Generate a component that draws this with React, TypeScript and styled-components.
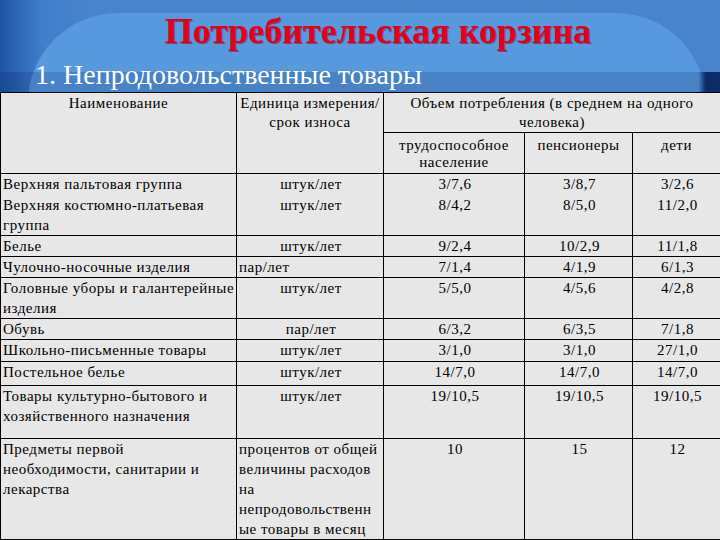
import styled, { createGlobalStyle } from 'styled-components';

const GlobalStyle = createGlobalStyle`
  html, body {
    margin: 0;
    padding: 0;
  }
  body {
    width: 720px;
    height: 540px;
    overflow: hidden;
    background: #0b2a66;
    font-family: 'Liberation Serif', serif;
  }
`;

const Slide = styled.div`
  width: 720px;
  height: 540px;
  display: flex;
  flex-direction: column;
  overflow: hidden;
  background: #0b2a66;
`;

const Header = styled.header`
  position: relative;
  flex: none;
  height: 92px;
  display: flex;
  flex-direction: column;
  overflow: hidden;
  background: linear-gradient(to right, #1f56a4 0, #3f7dc8 40px, #4784cc 90px, #4784cc 100%);

  /* lighter rounded panel behind the title */
  &::before {
    content: '';
    position: absolute;
    left: 28px;
    right: 14px;
    top: 13px;
    height: 220px;
    border-radius: 90px;
    background: #5799dd;
  }

  /* darker strip under the subtitle */
  &::after {
    content: '';
    position: absolute;
    left: 0;
    right: 0;
    top: 72px;
    height: 20px;
    background: linear-gradient(to right, rgba(14, 50, 120, 0.35) 0, rgba(14, 50, 120, 0.22) 40px, rgba(14, 50, 120, 0.22) 97%, #0c2c68 98%);
  }
`;

const Title = styled.h1`
  position: relative;
  z-index: 1;
  margin: 12px 0 0 0;
  padding-left: 36px;
  text-align: center;
  font-family: 'Liberation Serif', serif;
  font-size: 36px;
  line-height: 38px;
  font-weight: bold;
  color: #e2001a;
  text-shadow: 1px 1px 0 rgba(90, 0, 20, 0.45);
`;

const Subtitle = styled.h2`
  position: relative;
  z-index: 1;
  margin: 10px 0 0 35px;
  font-family: 'Liberation Serif', serif;
  font-size: 28px;
  line-height: 30px;
  font-weight: normal;
  color: #ffffff;
  white-space: nowrap;
`;

const Sheet = styled.table`
  flex: none;
  width: 720px;
  table-layout: fixed;
  border-collapse: collapse;
  background: #e7e7e7;
  color: #000;
  font-family: 'Liberation Serif', serif;
  font-size: 15px;
  letter-spacing: 0.5px;
  line-height: 20px;
`;

const HeadCell = styled.th<{ $sub?: boolean }>`
  padding: ${(p) => (p.$sub ? '4px 1px 0 1px' : '1px 1px 0 1px')};
  height: ${(p) => (p.$sub ? '36px' : 'auto')};
  border: 1px solid #000;
  font-family: 'Liberation Serif', serif;
  font-weight: normal;
  line-height: ${(p) => (p.$sub ? '17px' : '19px')};
  text-align: center;
  vertical-align: top;
`;

const Cell = styled.td<{ $align?: 'left' | 'center'; $joined?: boolean; $last?: boolean }>`
  padding: 0 0 0 2px;
  border-left: 1px solid #000;
  border-right: 1px solid #000;
  border-top: ${(p) => (p.$joined ? 'none' : '1px solid #000')};
  border-bottom: ${(p) => (p.$last ? '1px solid #000' : 'none')};
  font-family: 'Liberation Serif', serif;
  text-align: ${(p) => p.$align ?? 'center'};
  vertical-align: top;
  white-space: pre;
`;

const Row = styled.tr<{ $h: number }>`
  height: ${(p) => p.$h}px;
`;

type Item = {
  name: string;
  unit: string;
  unitLeft?: boolean;
  values: [string, string, string];
  h: number;
  joined?: boolean;
};

const items: Item[] = [
  { name: 'Верхняя пальтовая группа', unit: 'штук/лет', values: ['3/7,6', '3/8,7', '3/2,6'], h: 21 },
  { name: 'Верхняя костюмно-платьевая\nгруппа', unit: 'штук/лет', values: ['8/4,2', '8/5,0', '11/2,0'], h: 41, joined: true },
  { name: 'Белье', unit: 'штук/лет', values: ['9/2,4', '10/2,9', '11/1,8'], h: 21 },
  { name: 'Чулочно-носочные изделия', unit: 'пар/лет', unitLeft: true, values: ['7/1,4', '4/1,9', '6/1,3'], h: 21 },
  { name: 'Головные уборы и галантерейные\nизделия', unit: 'штук/лет', values: ['5/5,0', '4/5,6', '4/2,8'], h: 41 },
  { name: 'Обувь', unit: 'пар/лет', values: ['6/3,2', '6/3,5', '7/1,8'], h: 21 },
  { name: 'Школьно-письменные товары', unit: 'штук/лет', values: ['3/1,0', '3/1,0', '27/1,0'], h: 22 },
  { name: 'Постельное белье', unit: 'штук/лет', values: ['14/7,0', '14/7,0', '14/7,0'], h: 24 },
  {
    name: 'Товары культурно-бытового и\nхозяйственного назначения',
    unit: 'штук/лет',
    values: ['19/10,5', '19/10,5', '19/10,5'],
    h: 53,
  },
  {
    name: 'Предметы первой\nнеобходимости, санитарии и\nлекарства',
    unit: 'процентов от общей\nвеличины расходов\nна\nнепродовольственн\nые товары в месяц',
    unitLeft: true,
    values: ['10', '15', '12'],
    h: 99,
  },
];

const App = () => {
  return (
    <Slide>
      <GlobalStyle />
      <Header>
        <Title>Потребительская корзина</Title>
        <Subtitle>1. Непродовольственные товары</Subtitle>
      </Header>
      <Sheet>
        <colgroup>
          <col style={{ width: 236 }} />
          <col style={{ width: 147 }} />
          <col style={{ width: 141 }} />
          <col style={{ width: 108 }} />
          <col style={{ width: 88 }} />
        </colgroup>
        <thead>
          <tr>
            <HeadCell rowSpan={2}>Наименование</HeadCell>
            <HeadCell rowSpan={2}>
              Единица измерения/
              <br />
              срок износа
            </HeadCell>
            <HeadCell colSpan={3}>
              Объем потребления (в среднем на одного
              <br />
              человека)
            </HeadCell>
          </tr>
          <tr>
            <HeadCell $sub>
              трудоспособное
              <br />
              население
            </HeadCell>
            <HeadCell $sub>пенсионеры</HeadCell>
            <HeadCell $sub>дети</HeadCell>
          </tr>
        </thead>
        <tbody>
          {items.map((it, i) => {
            const last = i === items.length - 1;
            return (
              <Row key={it.name} $h={it.h}>
                <Cell $align="left" $joined={it.joined} $last={last}>
                  {it.name}
                </Cell>
                <Cell $align={it.unitLeft ? 'left' : 'center'} $joined={it.joined} $last={last}>
                  {it.unit}
                </Cell>
                {it.values.map((v, j) => (
                  <Cell key={j} $joined={it.joined} $last={last}>
                    {v}
                  </Cell>
                ))}
              </Row>
            );
          })}
        </tbody>
      </Sheet>
    </Slide>
  );
};

export default App;
